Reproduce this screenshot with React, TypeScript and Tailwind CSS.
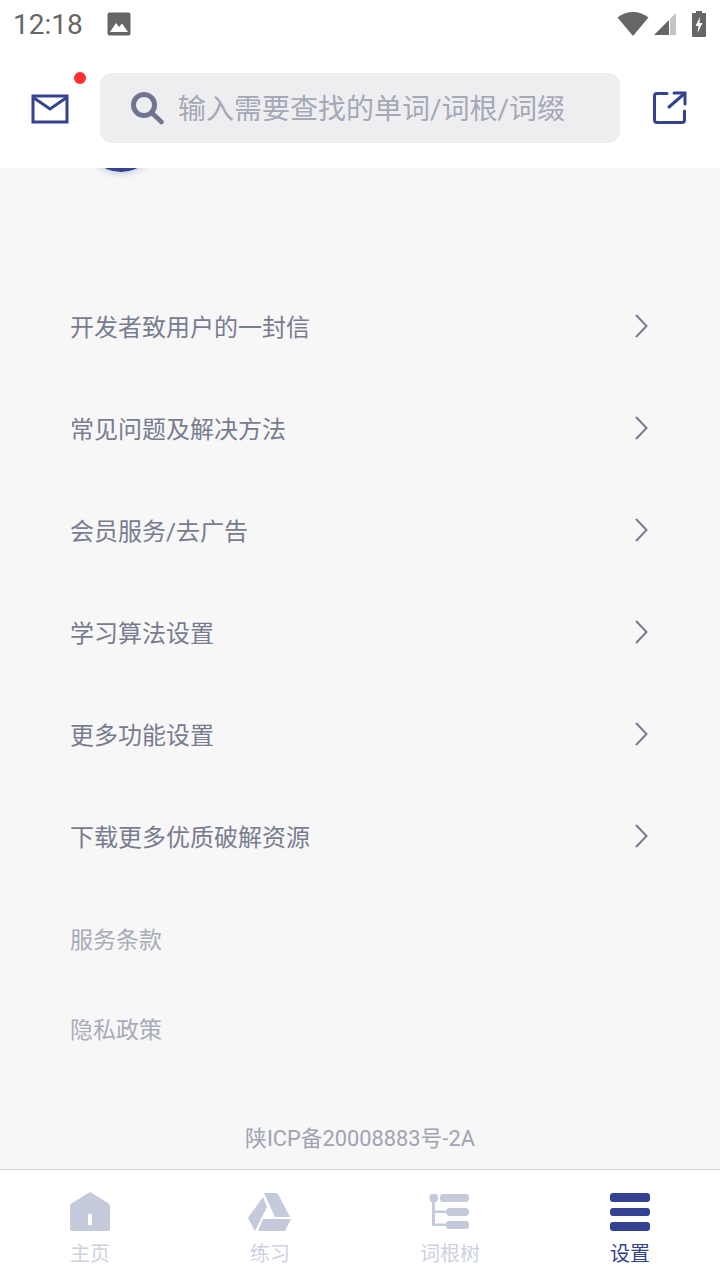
import React from "react";

const FONT = { fontFamily: 'Roboto, "Noto Sans CJK SC", "Noto Sans", sans-serif' };

const menu = ["开发者致用户的一封信", "常见问题及解决方法", "会员服务/去广告", "学习算法设置", "更多功能设置", "下载更多优质破解资源"];

function Chevron() {
  return (
    <svg className="mb-[2px]" width="16" height="24" viewBox="0 0 16 24" fill="none" stroke="#777b90" strokeWidth="2">
      <path d="M2 1 L12.5 12 L2 23" />
    </svg>
  );
}

function StatusBar() {
  return (
    <div className="flex h-[48px] shrink-0 items-center justify-between bg-white pl-[13px] pr-[14px]">
      <div className="flex items-center gap-[24px]">
        <span className="pt-[2px] text-[28px] leading-[48px] text-[#666666]">12:18</span>
        <svg width="24" height="24" viewBox="0 0 24 24">
          <rect x="0.5" y="0.5" width="23" height="23" rx="2" fill="#666666" />
          <path d="M3 20 L9 11 L12 15 L15 11.5 L21 20 Z" fill="#ffffff" />
        </svg>
      </div>
      <div className="flex items-center">
        <svg width="32" height="26" viewBox="0 0 32 26">
          <path d="M0.5 6.5 C9 -1 23 -1 31.5 6.5 L16 25 Z" fill="#666666" />
        </svg>
        <svg className="ml-[5px]" width="22" height="24" viewBox="0 0 22 24">
          <path d="M22 1 L0 23 H15 V8 Z" fill="#666666" />
          <path d="M22 1 L16 7 V23 H22 Z" fill="#c4c4c4" />
        </svg>
        <svg className="ml-[16px]" width="14" height="26" viewBox="0 0 14 26">
          <path d="M4 0 H10 V2 H13 Q14 2 14 3 V25 Q14 26 13 26 H1 Q0 26 0 25 V3 Q0 2 1 2 H4 Z" fill="#666666" />
          <path d="M8 6 L3.5 15 H6.5 L5.5 22 L10.5 12 H7.5 Z" fill="#ffffff" />
        </svg>
      </div>
    </div>
  );
}

function Header() {
  return (
    <div className="relative z-10 flex h-[120px] shrink-0 items-start bg-white">
      <div className="relative h-full w-[100px] shrink-0">
        <svg className="absolute left-[31px] top-[46px]" width="38" height="30" viewBox="0 0 38 30" fill="none" stroke="#344391" strokeWidth="3">
          <rect x="2" y="2" width="34" height="26" />
          <path d="M3 4 L19 15 L35 4" />
        </svg>
        <div className="absolute left-[74px] top-[24px] h-[12px] w-[12px] rounded-full bg-[#ff3030]" />
      </div>
      <div className="mt-[25px] flex h-[70px] w-[520px] items-center rounded-[12px] bg-[#eeeef1] pl-[31px]">
        <svg width="34" height="34" viewBox="0 0 34 34" fill="none" stroke="#6f7590">
          <circle cx="13" cy="14" r="10.5" strokeWidth="5" />
          <path d="M21.5 22.5 L30.5 31" strokeWidth="4.5" strokeLinecap="round" />
        </svg>
        <span className="ml-[13px] pt-[4px] text-[28px] leading-[40px] text-[#a5a8b6]">输入需要查找的单词/词根/词缀</span>
      </div>
      <svg className="ml-[33px] mt-[43px]" width="34" height="34" viewBox="0 0 34 34" fill="none" stroke="#344391" strokeWidth="3" strokeLinecap="round">
        <path d="M14 2.5 H4 Q1.5 2.5 1.5 5 V29 Q1.5 31.5 4 31.5 H29 Q31.5 31.5 31.5 29 V20" />
        <path d="M16 16 L31 3" />
        <path d="M21 2 H32 V13" />
      </svg>
    </div>
  );
}

function Main() {
  return (
    <div className="relative flex h-[1001px] shrink-0 flex-col bg-[#f7f7f7]">
      <div className="absolute left-[85px] top-[-34px] h-[38px] w-[72px] rounded-b-full bg-[#344391] shadow-[0_2px_6px_rgba(52,67,145,0.25)]" />
      <div className="h-[108px] shrink-0" />
      {menu.map((t) => (
        <div key={t} className="flex h-[102px] shrink-0 items-center justify-between pl-[70px] pr-[70px]">
          <span className="pt-[1px] text-[24px] leading-[34px] text-[#787c90]">{t}</span>
          <Chevron />
        </div>
      ))}
      <div className="flex h-[102px] shrink-0 items-center pl-[70px]">
        <span className="pt-[3px] text-[23px] leading-[34px] text-[#a8abb8]">服务条款</span>
      </div>
      <div className="flex h-[78px] shrink-0 items-center pl-[70px]">
        <span className="pt-[3px] text-[23px] leading-[34px] text-[#a8abb8]">隐私政策</span>
      </div>
      <div className="flex h-[101px] shrink-0 items-center justify-center pt-[41px]">
        <span className="text-[21.8px] leading-[30px] text-[#a0a3b1]">陕ICP备20008883号-2A</span>
      </div>
    </div>
  );
}

function Tab({ label, active, children }: { label: string; active?: boolean; children: React.ReactNode }) {
  return (
    <div className="flex w-[180px] flex-col items-center pt-[21px]">
      <div className="flex h-[42px] items-center justify-center">{children}</div>
      <span className={active ? "mt-[7px] text-[20px] leading-[28px] text-[#344391]" : "mt-[7px] text-[20px] leading-[28px] text-[#ced1e0]"}>{label}</span>
    </div>
  );
}

function TabBar() {
  return (
    <div className="flex h-[111px] shrink-0 border-t border-[#d4d4d8] bg-white">
      <Tab label="主页">
        <svg width="40" height="40" viewBox="0 0 40 40">
          <path fillRule="evenodd" d="M20 0 L38 11 Q40 12 40 14 V37 Q40 39 38 39 H2 Q0 39 0 37 V14 Q0 12 2 11 Z M18 23 V33 H22 V23 Q22 21.5 20 21.5 Q18 21.5 18 23 Z" fill="#c5cadb" />
        </svg>
      </Tab>
      <Tab label="练习">
        <svg width="44" height="40" viewBox="0 0 44 40" fill="#c5cadb">
          <path d="M16 1 H28 Q29 1 30 2 L42 25 H27 Z" />
          <path d="M15 5 L19 15 L7 39 L0.5 27 Q0 26 0.5 25 Z" />
          <path d="M15 27 H43 L37 39 H10 Z" />
        </svg>
      </Tab>
      <Tab label="词根树">
        <svg width="42" height="36" viewBox="0 0 42 36" fill="#c5cadb">
          <rect x="0.5" y="0" width="8.5" height="8" rx="3" />
          <rect x="11" y="0" width="29" height="8" rx="3" />
          <rect x="3" y="4" width="3" height="28" />
          <rect x="3" y="16.5" width="15" height="2.5" />
          <rect x="3" y="29.5" width="15" height="2.5" />
          <rect x="17" y="14" width="23" height="8" rx="4" />
          <rect x="17" y="27" width="23" height="8" rx="3" />
        </svg>
      </Tab>
      <Tab label="设置" active>
        <svg width="40" height="38" viewBox="0 0 40 38" fill="#344391">
          <rect x="0" y="0" width="40" height="9" rx="3" />
          <rect x="0" y="15" width="40" height="8" rx="3" />
          <rect x="0" y="29" width="40" height="9" rx="3" />
        </svg>
      </Tab>
    </div>
  );
}

export default function App() {
  return (
    <div className="flex h-[1280px] w-[720px] flex-col overflow-hidden bg-white" style={FONT}>
      <StatusBar />
      <Header />
      <Main />
      <TabBar />
    </div>
  );
}
